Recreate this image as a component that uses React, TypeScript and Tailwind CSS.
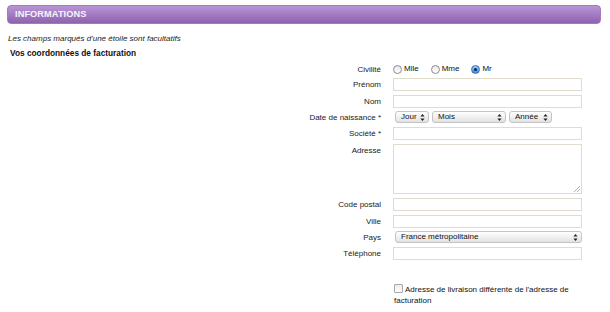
import React from "react";

const Arrows = () => (
  <svg width="5" height="7" viewBox="0 0 5 7" className="shrink-0">
    <path d="M2.5 0 L4.6 2.6 L0.4 2.6 Z" fill="#222" />
    <path d="M2.5 7 L4.6 4.4 L0.4 4.4 Z" fill="#222" />
  </svg>
);

const Select = ({ label, w }: { label: string; w: string }) => (
  <div
    className={`${w} h-[12px] rounded-[3px] border border-[#c4c4c4] bg-gradient-to-b from-[#ffffff] to-[#e2e2e2] flex items-center justify-between pl-[5px] pr-[3px] text-[8px] leading-[10px] text-[#111] overflow-hidden whitespace-nowrap`}
  >
    <span>{label}</span>
    <Arrows />
  </div>
);

const Input = () => (
  <div className="w-[189px] h-[13px] border border-[#e2dccd] bg-white" />
);

const Radio = ({ checked }: { checked?: boolean }) =>
  checked ? (
    <span className="inline-flex w-[9px] h-[9px] rounded-full border border-[#3b6fb5] bg-gradient-to-b from-[#9fcaf5] to-[#3f8ae0] items-center justify-center">
      <span className="w-[3px] h-[3px] rounded-full bg-[#10243f]" />
    </span>
  ) : (
    <span className="inline-block w-[9px] h-[9px] rounded-full border border-[#8c8c8c] bg-gradient-to-b from-[#e8e8e8] to-[#ffffff]" />
  );

const Row = ({
  label,
  children,
  className = "",
}: {
  label: string;
  children: React.ReactNode;
  className?: string;
}) => (
  <div className={`flex gap-[12px] ${className}`}>
    <div className="w-[381px] shrink-0 text-right leading-[13px] text-[8px] text-[#222]">
      {label}
    </div>
    <div className="w-[189px]">{children}</div>
  </div>
);

export default function App() {
  return (
    <div className="w-[610px] h-[312px] bg-white font-['Liberation_Sans',Arial,sans-serif] text-[#222] overflow-hidden pt-[5px]">
      <div className="ml-[7px] w-[594px] h-[19px] rounded-[4px] border border-[#a17bbf] bg-gradient-to-b from-[#b995d6] to-[#8f62ae] flex items-center pl-[7px]">
        <span className="text-[9.2px] font-bold text-[#f7f2fb] leading-none tracking-[0.1px]">
          INFORMATIONS
        </span>
      </div>
      <div className="ml-[8px] mt-[9px] text-[8px] italic leading-[11px] text-[#222]">
        Les champs marqués d'une étoile sont facultatifs
      </div>
      <div className="ml-[10px] mt-[4px] text-[8.3px] font-bold leading-[11px] text-[#111]">
        Vos coordonnées de facturation
      </div>

      <div className="mt-[4px] flex flex-col">
        <Row label="Civilité" className="h-[12px]">
          <div className="flex items-center h-[12px] text-[8px] text-[#111]">
            <Radio />
            <span className="ml-[2px]">Mlle</span>
            <span className="ml-[12px]" />
            <Radio />
            <span className="ml-[2px]">Mme</span>
            <span className="ml-[12px]" />
            <Radio checked />
            <span className="ml-[2px]">Mr</span>
          </div>
        </Row>
        <Row label="Prénom" className="mt-[3px]">
          <Input />
        </Row>
        <Row label="Nom" className="mt-[4px]">
          <Input />
        </Row>
        <Row label="Date de naissance *" className="mt-[3px]">
          <div className="flex gap-[3px] pl-[2px]">
            <Select label="Jour" w="w-[34px]" />
            <Select label="Mois" w="w-[74px]" />
            <Select label="Année" w="w-[43px]" />
          </div>
        </Row>
        <Row label="Société *" className="mt-[3px]">
          <Input />
        </Row>
        <Row label="Adresse" className="mt-[4px]">
          <div className="relative w-[189px] h-[50px] border border-[#e2dccd] bg-white">
            <svg
              width="6"
              height="6"
              viewBox="0 0 6 6"
              className="absolute right-[1px] bottom-[1px]"
            >
              <path d="M6 0 L0 6 M6 3 L3 6" stroke="#9a9a9a" strokeWidth="0.8" />
            </svg>
          </div>
        </Row>
        <Row label="Code postal" className="mt-[4px]">
          <Input />
        </Row>
        <Row label="Ville" className="mt-[4px]">
          <Input />
        </Row>
        <Row label="Pays" className="mt-[3px]">
          <div className="pl-[2px]">
            <Select label="France métropolitaine" w="w-[187px]" />
          </div>
        </Row>
        <Row label="Téléphone" className="mt-[3px]">
          <Input />
        </Row>
        <Row label="" className="mt-[24px]">
          <div className="relative text-[8px] leading-[11px] text-[#111] pl-[1px]">
            <span className="inline-block align-[-1px] w-[9px] h-[9px] border border-[#a8a8a8] rounded-[1px] bg-gradient-to-b from-[#ececec] to-[#ffffff] mr-[2px]" />
            Adresse de livraison différente de l'adresse de facturation
          </div>
        </Row>
      </div>
    </div>
  );
}
